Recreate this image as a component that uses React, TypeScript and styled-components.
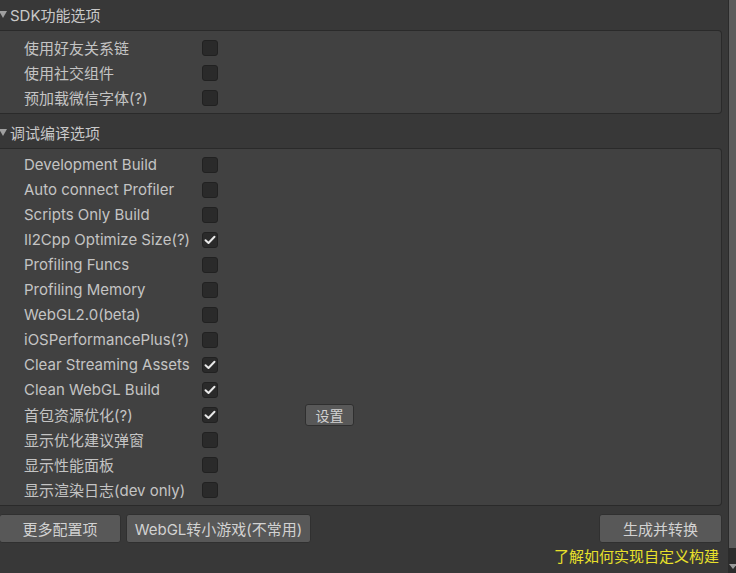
import { createGlobalStyle, styled } from "styled-components";

const GlobalStyle = createGlobalStyle`
  html, body {
    margin: 0;
    padding: 0;
    background: #383838;
  }
  body {
    font-family: Inter, "Noto Sans CJK SC", sans-serif;
    color: #c4c4c4;
    font-size: 15px;
  }
`;

const Page = styled.div`
  width: 736px;
  height: 573px;
  display: flex;
  overflow: hidden;
  background: #383838;
`;

const Content = styled.div`
  flex: 1;
  display: flex;
  flex-direction: column;
  gap: 4px;
  padding-right: 6px;
`;

const Scrollbar = styled.div`
  width: 8px;
  background: #2b2b2b;
  display: flex;
  flex-direction: column;
  align-items: flex-end;
`;

const Thumb = styled.div`
  width: 7px;
  height: 548px;
  background: #5c5c5c;
`;

const ScrollArrow = styled.div`
  margin-top: 16px;
  margin-right: -1px;
  width: 0;
  height: 0;
  border-left: 4px solid transparent;
  border-right: 4px solid transparent;
  border-top: 5px solid #9a9a9a;
`;

const Section = styled.div`
  display: flex;
  flex-direction: column;
`;

const Header = styled.div`
  height: 30px;
  box-sizing: border-box;
  padding-bottom: 2px;
  display: flex;
  align-items: center;
  gap: 3px;
  font-size: 15px;
  color: #c8c8c8;
`;

const Triangle = styled.span`
  width: 0;
  height: 0;
  margin-left: -1px;
  border-left: 4px solid transparent;
  border-right: 4px solid transparent;
  border-top: 7px solid #a0a0a0;
  margin-top: 1px;
`;

const Box = styled.div<{ $pad: string }>`
  background: #414141;
  border: 1px solid #2a2a2a;
  border-left: none;
  border-radius: 0 4px 4px 0;
  padding: ${(p) => p.$pad};
  display: flex;
  flex-direction: column;
`;

const Row = styled.div`
  height: 25px;
  display: flex;
  align-items: center;
  padding-left: 24px;
`;

const Label = styled.span`
  width: 178px;
  white-space: nowrap;
  color: #c4c4c4;
`;

const Check = styled.span`
  width: 16px;
  height: 16px;
  box-sizing: border-box;
  background: #2a2a2a;
  border: 1px solid #212121;
  border-radius: 3px;
  display: flex;
  align-items: center;
  justify-content: center;
`;

const SmallButton = styled.button`
  margin-left: 87px;
  width: 49px;
  height: 22px;
  padding: 0;
  background: #585858;
  border: 1px solid #2f2f2f;
  border-radius: 3px;
  color: #d2d2d2;
  font-family: inherit;
  font-size: 14px;
`;

const Footer = styled.div`
  margin-top: 4px;
  display: flex;
  flex-direction: column;
`;

const ButtonRow = styled.div`
  display: flex;
  gap: 5px;
  margin-left: -1px;
`;

const Button = styled.button<{ $w: number }>`
  width: ${(p) => p.$w}px;
  height: 29px;
  padding: 0;
  background: #585858;
  border: 1px solid #303030;
  border-radius: 3px;
  color: #d2d2d2;
  font-family: inherit;
  font-size: 15px;
`;

const Spacer = styled.div`
  flex: 1;
`;

const Link = styled.div`
  align-self: flex-end;
  margin-top: 2px;
  margin-right: 3px;
  color: #e8e02a;
  font-size: 15px;
  line-height: 24px;
`;

const Tick = () => (
  <svg width="12" height="10" viewBox="0 0 12 10">
    <path d="M1.5 5.2 L4.5 8 L10.5 1.8" fill="none" stroke="#e8e8e8" strokeWidth="2" strokeLinecap="round" strokeLinejoin="round" />
  </svg>
);

type Item = { label: string; checked?: boolean; button?: string };

const sdkItems: Item[] = [
  { label: "使用好友关系链" },
  { label: "使用社交组件" },
  { label: "预加载微信字体(?)" },
];

const debugItems: Item[] = [
  { label: "Development Build" },
  { label: "Auto connect Profiler" },
  { label: "Scripts Only Build" },
  { label: "Il2Cpp Optimize Size(?)", checked: true },
  { label: "Profiling Funcs" },
  { label: "Profiling Memory" },
  { label: "WebGL2.0(beta)" },
  { label: "iOSPerformancePlus(?)" },
  { label: "Clear Streaming Assets", checked: true },
  { label: "Clean WebGL Build", checked: true },
  { label: "首包资源优化(?)", checked: true, button: "设置" },
  { label: "显示优化建议弹窗" },
  { label: "显示性能面板" },
  { label: "显示渲染日志(dev only)" },
];

const Rows = ({ items }: { items: Item[] }) => (
  <>
    {items.map((it) => (
      <Row key={it.label}>
        <Label>{it.label}</Label>
        <Check>{it.checked && <Tick />}</Check>
        {it.button && <SmallButton>{it.button}</SmallButton>}
      </Row>
    ))}
  </>
);

export default function App() {
  return (
    <>
      <GlobalStyle />
      <Page>
        <Content>
          <Section>
            <Header>
              <Triangle />
              SDK功能选项
            </Header>
            <Box $pad="4px 0 3px">
              <Rows items={sdkItems} />
            </Box>
          </Section>
          <Section>
            <Header>
              <Triangle />
              调试编译选项
            </Header>
            <Box $pad="3px 0 3px">
              <Rows items={debugItems} />
            </Box>
          </Section>
          <Footer>
            <ButtonRow>
              <Button $w={122}>更多配置项</Button>
              <Button $w={185}>WebGL转小游戏(不常用)</Button>
              <Spacer />
              <Button $w={123}>生成并转换</Button>
            </ButtonRow>
            <Link>了解如何实现自定义构建</Link>
          </Footer>
        </Content>
        <Scrollbar>
          <Thumb />
          <ScrollArrow />
        </Scrollbar>
      </Page>
    </>
  );
}
